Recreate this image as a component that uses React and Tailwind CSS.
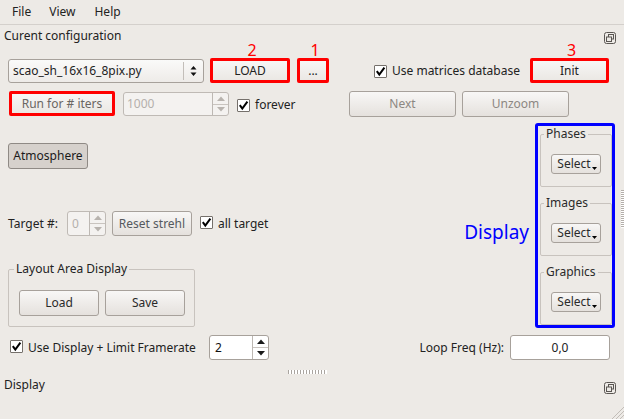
import React from "react";

function Check() {
  return (
    <span className="inline-flex w-[13px] h-[13px] shrink-0 border border-[#75706b] bg-white items-center justify-center rounded-[1px]">
      <svg width="11" height="11" viewBox="0 0 11 11">
        <path d="M1.8 5.2 L4.3 8.6 L9.4 1.6" stroke="#000" strokeWidth="2" fill="none" />
      </svg>
    </span>
  );
}

function FloatIcon() {
  return (
    <svg width="12" height="12" viewBox="0 0 12 12">
      <rect x="0.5" y="0.5" width="11" height="11" rx="2" fill="none" stroke="#5a5652" />
      <rect x="4.5" y="2.5" width="5" height="4.5" fill="none" stroke="#5a5652" />
      <rect x="2.5" y="5" width="5" height="4.5" fill="#edeae6" stroke="#5a5652" />
    </svg>
  );
}

function Btn({ children, className = "", text = "text-[#2a2a2a]" }) {
  return (
    <div
      className={`flex items-center justify-center rounded-[3px] border border-[#a7a19b] bg-linear-to-b from-[#f8f7f6] to-[#e5e1dd] ${text} ${className}`}
    >
      {children}
    </div>
  );
}

function RedBox({ children, num, className = "" }) {
  return (
    <div className={`relative h-[25px] border-[3px] border-[#ff0000] rounded-[2px] ${className}`}>
      <div className="h-full w-full flex items-center justify-center bg-linear-to-b from-[#f7f6f5] to-[#ebe8e4]">
        {children}
      </div>
      {num && (
        <span className="absolute left-1/2 -translate-x-1/2 top-[-20px] ml-[2px] text-[16px] leading-[18px] text-[#ff0000]">
          {num}
        </span>
      )}
    </div>
  );
}

function SpinArrows({ disabled }) {
  const c = disabled ? "#b8b3ae" : "#1a1a1a";
  return (
    <div className="flex flex-col w-[16px] h-full border-l border-[#bdb8b3]">
      <div className="flex-1 flex items-center justify-center border-b border-[#c9c4bf]">
        <svg width="8" height="5" viewBox="0 0 8 5"><path d="M0 5 L4 0.5 L8 5 Z" fill={c} /></svg>
      </div>
      <div className="flex-1 flex items-center justify-center">
        <svg width="8" height="5" viewBox="0 0 8 5"><path d="M0 0 L4 4.5 L8 0 Z" fill={c} /></svg>
      </div>
    </div>
  );
}

function SelectBtn() {
  return (
    <Btn className="w-[50px] h-[20px] relative">
      <span className="mr-[4px]">Select</span>
      <svg className="absolute right-[3px] bottom-[3px]" width="5" height="3" viewBox="0 0 5 3">
        <path d="M0 0 L5 0 L2.5 3 Z" fill="#000" />
      </svg>
    </Btn>
  );
}

function GroupBox({ title, className = "" }) {
  return (
    <fieldset className={`ml-[2px] w-[72px] border border-[#c8c3be] rounded-[2px] ${className}`}>
      <legend className="ml-[3px] px-[2px] leading-[14px] text-[#2a2a2a]">{title}</legend>
      <div className="mt-[13px] flex justify-center">
        <SelectBtn />
      </div>
    </fieldset>
  );
}

export default function App() {
  return (
    <div className="relative w-[624px] h-[419px] overflow-hidden bg-[#edeae6] text-[12px] text-[#222] font-['Noto_Sans',sans-serif]">
      {/* menu bar */}
      <div className="h-[25px] border-b border-[#d4d0cc] flex items-center leading-[16px]">
        <span className="ml-[12px]">File</span>
        <span className="ml-[18px]">View</span>
        <span className="ml-[19px]">Help</span>
      </div>

      {/* dock title */}
      <div className="mt-[3px] h-[16px] flex items-center justify-between pl-[4px] pr-[8px]">
        <span className="leading-[16px]">Curent configuration</span>
        <span className="mt-[4px]"><FloatIcon /></span>
      </div>

      {/* row 1 */}
      <div className="mt-[14px] h-[25px] flex items-start">
        <div className="ml-[8px] mt-[1px] w-[196px] h-[24px] rounded-[3px] border border-[#a7a19b] bg-linear-to-b from-[#fafaf9] to-[#eeebe8] flex items-center">
          <span className="ml-[4px] flex-1">scao_sh_16x16_8pix.py</span>
          <div className="w-px h-[18px] bg-[#c3beb9]" />
          <svg className="mx-[6px]" width="7" height="12" viewBox="0 0 7 12">
            <path d="M0.5 4.5 L3.5 1 L6.5 4.5 Z M0.5 7.5 L3.5 11 L6.5 7.5 Z" fill="#111" />
          </svg>
        </div>
        <RedBox num="2" className="ml-[6px] w-[80px]">LOAD</RedBox>
        <RedBox num="1" className="ml-[7px] w-[32px]">...</RedBox>
        <div className="ml-[45px] mt-[6px] flex items-center">
          <Check />
          <span className="ml-[5px] leading-[14px]">Use matrices database</span>
        </div>
        <RedBox num="3" className="ml-auto mr-[15px] w-[79px]">Init</RedBox>
      </div>

      {/* row 2 */}
      <div className="mt-[8px] h-[26px] flex items-start">
        <RedBox className="ml-[9px] w-[106px]"><span className="text-[#6a6662]">Run for # iters</span></RedBox>
        <div className="ml-[8px] mt-[1px] w-[106px] h-[24px] rounded-[3px] border border-[#bfbab5] bg-[#f4f2f0] flex items-center">
          <span className="ml-[3px] flex-1 text-[#b4b0ac]">1000</span>
          <SpinArrows disabled />
        </div>
        <div className="ml-[8px] mt-[7px] w-[112px] flex items-center">
          <Check />
          <span className="ml-[5px] leading-[14px]">forever</span>
        </div>
        <Btn className="w-[107px] h-[26px]" text="text-[#8c8782]">Next</Btn>
        <Btn className="ml-[6px] w-[107px] h-[26px]" text="text-[#8c8782]">Unzoom</Btn>
      </div>

      {/* middle region */}
      <div className="mt-[6px] h-[205px] flex items-start">
        <div className="flex-1 flex flex-col">
          <div className="ml-[8px] mt-[20px] w-[80px] h-[26px] rounded-[3px] border border-[#8f8a85] bg-[#d6d1cc] flex items-center justify-center text-[#1a1a1a]">
            Atmosphere
          </div>
          <div className="mt-[42px] h-[25px] flex items-center">
            <span className="ml-[8px] w-[51px]">Target #:</span>
            <div className="ml-[8px] w-[39px] h-[25px] rounded-[3px] border border-[#bfbab5] bg-[#f4f2f0] flex items-center">
              <span className="ml-[4px] flex-1 text-[#b4b0ac]">0</span>
              <SpinArrows disabled />
            </div>
            <Btn className="ml-[6px] w-[80px] h-[25px]" text="text-[#55595e]">Reset strehl</Btn>
            <span className="ml-[8px]"><Check /></span>
            <span className="ml-[5px]">all target</span>
          </div>
          <fieldset className="mt-[25px] ml-[8px] w-[187px] h-[66px] border border-[#c8c3be] rounded-[2px]">
            <legend className="ml-[5px] px-[2px] leading-[16px]">Layout Area Display</legend>
            <div className="mt-[13px] ml-[10px] flex">
              <Btn className="w-[80px] h-[26px]">Load</Btn>
              <Btn className="ml-[6px] w-[80px] h-[26px]">Save</Btn>
            </div>
          </fieldset>
        </div>
        <span className="mt-[97px] mr-[6px] text-[19px] leading-[24px] text-[#0000ff]">Display</span>
        <div className="w-[80px] h-[205px] border-[3px] border-[#0000ff] rounded-[3px] flex flex-col">
          <GroupBox title="Phases" className="mt-[1px] h-[60px]" />
          <GroupBox title="Images" className="mt-[9px] h-[60px]" />
          <GroupBox title="Graphics" className="mt-[9px] h-[60px]" />
        </div>
        <div className="ml-[6px] mt-[67px] w-[3px] h-[38px] bg-[repeating-linear-gradient(180deg,#b3aea9_0px,#b3aea9_1px,#ffffff_1px,#ffffff_2px)]" />
      </div>

      {/* bottom row */}
      <div className="mt-[7px] h-[25px] flex items-center">
        <span className="ml-[10px]"><Check /></span>
        <span className="ml-[5px] w-[181px]">Use Display + Limit Framerate</span>
        <div className="w-[60px] h-[25px] rounded-[3px] border border-[#a7a19b] bg-white flex items-center">
          <span className="ml-[5px] flex-1 text-[#111]">2</span>
          <SpinArrows />
        </div>
        <span className="ml-auto">Loop Freq (Hz):</span>
        <div className="ml-[6px] mr-[14px] w-[100px] h-[25px] rounded-[3px] border border-[#a7a19b] bg-white flex items-center justify-center">
          0,0
        </div>
      </div>

      {/* splitter handle */}
      <div className="mt-[10px] ml-[288px] w-[39px] h-[4px] bg-[repeating-linear-gradient(90deg,#aaa5a0_0px,#aaa5a0_1px,#ffffff_1px,#ffffff_3px)]" />

      {/* Display dock title */}
      <div className="mt-[3px] h-[16px] flex items-center justify-between pl-[4px] pr-[8px]">
        <span className="leading-[16px]">Display</span>
        <span className="mt-[5px]"><FloatIcon /></span>
      </div>

      {/* resize grip */}
      <svg className="absolute right-0 bottom-0" width="14" height="14" viewBox="0 0 14 14">
        <path d="M14 2 L2 14 M14 6 L6 14 M14 10 L10 14" stroke="#c2bdb8" strokeWidth="1" />
      </svg>
    </div>
  );
}
